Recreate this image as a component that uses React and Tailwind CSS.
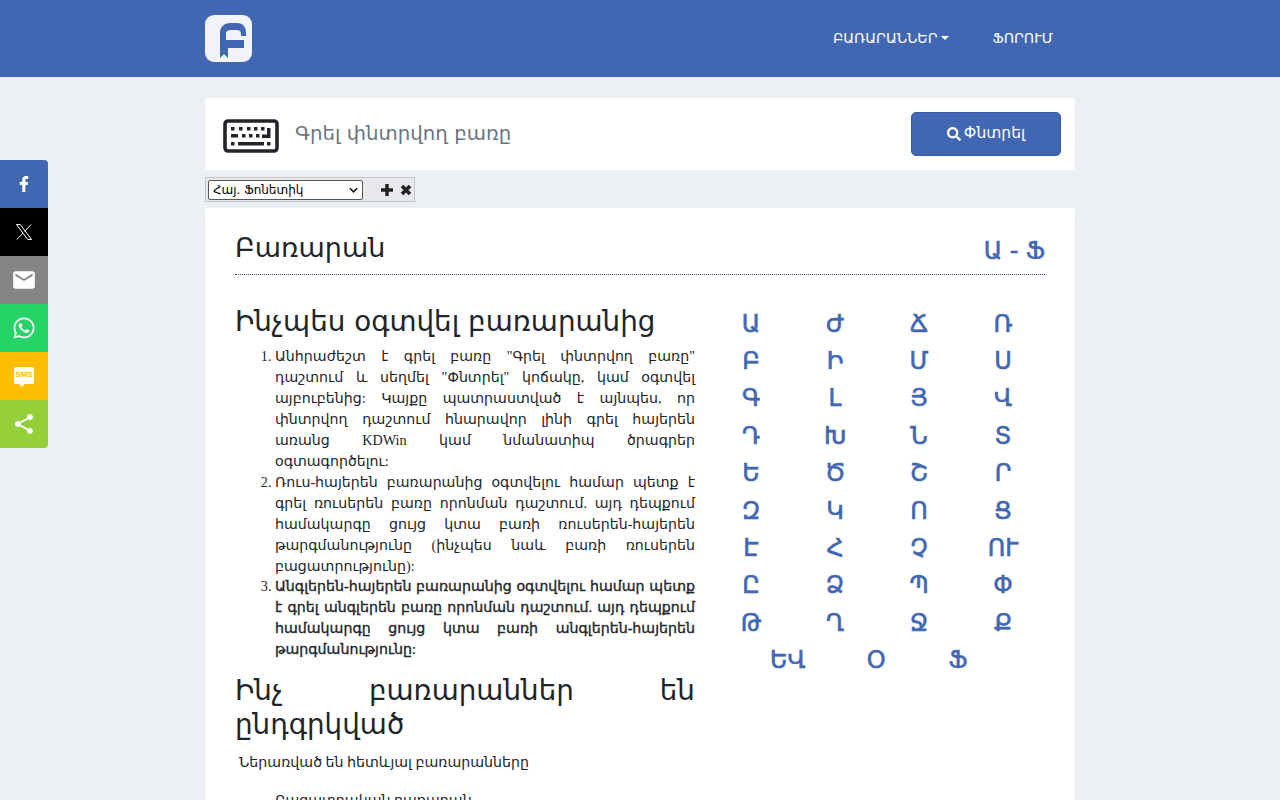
import React from "react";
import { FaSearch, FaFacebookF, FaWhatsapp } from "react-icons/fa";
import { MdEmail, MdShare } from "react-icons/md";

const rows = [
  ["Ա", "Ժ", "Ճ", "Ռ"],
  ["Բ", "Ի", "Մ", "Ս"],
  ["Գ", "Լ", "Յ", "Վ"],
  ["Դ", "Խ", "Ն", "Տ"],
  ["Ե", "Ծ", "Շ", "Ր"],
  ["Զ", "Կ", "Ո", "Ց"],
  ["Է", "Հ", "Չ", "ՈՒ"],
  ["Ը", "Ձ", "Պ", "Փ"],
  ["Թ", "Ղ", "Ջ", "Ք"],
];

const XLogo = () => (
  <svg viewBox="0 0 24 24" className="w-5 h-5" fill="none" stroke="white" strokeWidth="1.2">
    <path d="M3 3h4.5l13.5 18h-4.5z" />
    <path d="M20.5 3l-7.7 8.3M10.6 13.7L3.2 21" />
  </svg>
);

const KeyboardIcon = () => (
  <svg viewBox="0 0 56 34" className="w-[56px] h-[34px] mt-[3px]">
    <rect x="2" y="2" width="52" height="30" rx="3" fill="none" stroke="#212529" strokeWidth="3.6" />
    <path
      fill="#212529"
      d="M8 8h3.5v3.5H8zM16 8h3.5v3.5H16zM24 8h3.5v3.5H24zM31 8h3.5v3.5H31zM38 8h3.5v3.5H38zM8 15h7v3.5H8zM19 15h3.5v3.5H19zM26 15h3.5v3.5H26zM33 15h3.5v3.5H33zM44 9h3.5v10H39v-3.5h5zM8 23h3.5v3.5H8zM15 23h26v3.5H15zM44 23h3.5v3.5H44z"
    />
  </svg>
);

const SmsIcon = () => (
  <div className="relative w-[20px] h-[17px] bg-white rounded-[2px] flex items-center justify-center -mt-[2px]">
    <span className="text-[8px] leading-none font-bold text-[#ffbd00] font-['Liberation_Sans',sans-serif]">SMS</span>
    <span className="absolute -bottom-[3px] left-[5px] w-0 h-0 border-x-[3px] border-x-transparent border-t-[3px] border-t-white" />
  </div>
);

const shares = [
  { bg: "bg-[#4267b2]", round: "rounded-tr", icon: <FaFacebookF className="w-[14px] h-[16px] text-white" /> },
  { bg: "bg-black", round: "", icon: <XLogo /> },
  { bg: "bg-[#848484]", round: "", icon: <MdEmail className="w-[26px] h-[26px] text-white" /> },
  { bg: "bg-[#25d366]", round: "", icon: <FaWhatsapp className="w-6 h-6 text-white" /> },
  { bg: "bg-[#ffbd00]", round: "", icon: <SmsIcon /> },
  { bg: "bg-[#95d03a]", round: "rounded-br", icon: <MdShare className="w-6 h-6 text-white" /> },
];

export default function App() {
  return (
    <div className="h-[800px] overflow-hidden bg-[#ecf0f5] text-[#212529] font-['Liberation_Serif','DejaVu_Sans',serif]">
      {/* Header */}
      <header className="h-[77px] bg-[#4267b2]">
        <div className="w-[870px] mx-auto h-full flex items-center justify-between">
          <svg viewBox="0 0 47 47" className="w-[47px] h-[47px]">
            <rect width="47" height="47" rx="9" fill="#f1f3f7" />
            <path
              fill="#4267b2"
              d="M15 43V18C15 11 20 8 26 8h6c6 0 9 4 9 10v3h-5v-2c0-3-2-4-4-4h-6c-3 0-5 1-5 4v6h18v8H23v10l-4-4z"
            />
          </svg>
          <nav className="flex items-center text-white text-[14.15px] font-['DejaVu_Sans',sans-serif]">
            <span className="flex items-center mr-[44px]">
              ԲԱՌԱՐԱՆՆԵՐ
              <span className="ml-[3px] w-0 h-0 border-x-[4px] border-x-transparent border-t-[4px] border-t-white" />
            </span>
            <span className="mr-[22px]">ՖՈՐՈՒՄ</span>
          </nav>
        </div>
      </header>

      {/* Share sidebar */}
      <div className="fixed left-0 top-[160px] w-12 flex flex-col">
        {shares.map((s, i) => (
          <div key={i} className={`h-12 flex items-center justify-center ${s.bg} ${s.round}`}>
            {s.icon}
          </div>
        ))}
      </div>

      <main className="w-[870px] mx-auto pt-[21px]">
        {/* Search */}
        <div className="h-[72px] bg-white rounded flex items-center pl-[18px] pr-[14px]">
          <KeyboardIcon />
          <span className="flex-1 ml-[16px] text-[19.8px] text-[#6c757d] font-['DejaVu_Sans',sans-serif]">
            Գրել փնտրվող բառը
          </span>
          <button className="w-[150px] h-[44px] rounded-[5px] bg-[#4267b2] border border-[#3a5ba0] text-white flex items-center justify-center gap-[3px] text-[15.5px] font-['DejaVu_Sans',sans-serif]">
            <FaSearch className="w-[14px] h-[14px]" />
            Փնտրել
          </button>
        </div>

        {/* Keyboard bar */}
        <div className="mt-[7px] w-[210px] h-[25px] bg-[#e7e9ec] border border-[#c4c7cb] flex items-center pl-[2px]">
          <div className="w-[155px] h-[20px] bg-white border border-[#555] rounded-[2px] flex items-center justify-between px-[4px] text-[12px] text-black font-['DejaVu_Sans',sans-serif]">
            Հայ. Ֆոնետիկ
            <svg viewBox="0 0 10 6" className="w-[9px] h-[6px]"><path d="M1 1l4 4 4-4" fill="none" stroke="#111" strokeWidth="1.8" /></svg>
          </div>
          <svg viewBox="0 0 12 12" className="ml-[18px] w-[12px] h-[12px]"><path d="M6 0v12M0 6h12" stroke="#222" strokeWidth="3.4" /></svg>
          <svg viewBox="0 0 12 12" className="ml-[7px] w-[12px] h-[12px]"><path d="M2 2l8 8M10 2l-8 8" stroke="#222" strokeWidth="3.6" /></svg>
        </div>

        {/* Main card */}
        <section className="mt-[6px] bg-white rounded-t px-[30px] pt-[20px] h-[700px]">
          <div className="flex items-center justify-between h-[47px] border-b border-dotted border-[#2f4a80] font-['DejaVu_Sans',sans-serif]">
            <h1 className="text-[27px] font-normal -mt-[6px]">Բառարան</h1>
            <span className="text-[24px] text-[#4267b2] font-normal [-webkit-text-stroke:0.6px_#4267b2]">Ա - Ֆ</span>
          </div>

          <div className="flex gap-[40px] mt-[30px]">
            <div className="w-[460px] text-[14.2px] leading-[20.95px] text-justify">
              <h2 className="text-[27.8px] leading-[34px] font-['DejaVu_Sans',sans-serif] font-normal mb-[7px]">Ինչպես օգտվել բառարանից</h2>
              <ol className="list-decimal pl-[40px]">
                <li>Անհրաժեշտ է գրել բառը "Գրել փնտրվող բառը" դաշտում և սեղմել "Փնտրել" կոճակը, կամ օգտվել այբուբենից: Կայքը պատրաստված է այնպես, որ փնտրվող դաշտում հնարավոր լինի գրել հայերեն առանց KDWin կամ նմանատիպ ծրագրեր օգտագործելու:</li>
                <li>Ռուս-հայերեն բառարանից օգտվելու համար պետք է գրել ռուսերեն բառը որոնման դաշտում. այդ դեպքում համակարգը ցույց կտա բառի ռուսերեն-հայերեն թարգմանությունը (ինչպես նաև բառի ռուսերեն բացատրությունը):</li>
                <li><span className="[-webkit-text-stroke:0.35px_#212529]">Անգլերեն-հայերեն բառարանից օգտվելու համար պետք է գրել անգլերեն բառը որոնման դաշտում. այդ դեպքում համակարգը ցույց կտա բառի անգլերեն-հայերեն թարգմանությունը:</span></li>
              </ol>
              <h2 className="mt-[14px] text-[27.8px] leading-[34px] font-['DejaVu_Sans',sans-serif] font-normal">Ինչ բառարաններ են ընդգրկված</h2>
              <p className="mt-[10px] ml-[4px]">Ներառված են հետևյալ բառարանները</p>
              <ul className="mt-[17px] pl-[40px]">
                <li>Բացատրական բառարան</li>
              </ul>
            </div>

            <div className="w-[310px] pt-[0.5px] text-[24px] leading-[37.4px] text-[#4267b2] font-['DejaVu_Sans',sans-serif] font-normal [-webkit-text-stroke:0.6px_#4267b2]">
              {rows.map((row, i) => (
                <div key={i} className="grid grid-cols-[repeat(4,84px)]">
                  {row.map((l) => (
                    <a key={l} className="w-[32px] text-center">{l}</a>
                  ))}
                </div>
              ))}
              <div className="flex pl-[35px]">
                <a>ԵՎ</a>
                <a className="ml-[61px]">Օ</a>
                <a className="ml-[63px]">Ֆ</a>
              </div>
            </div>
          </div>
        </section>
      </main>
    </div>
  );
}
